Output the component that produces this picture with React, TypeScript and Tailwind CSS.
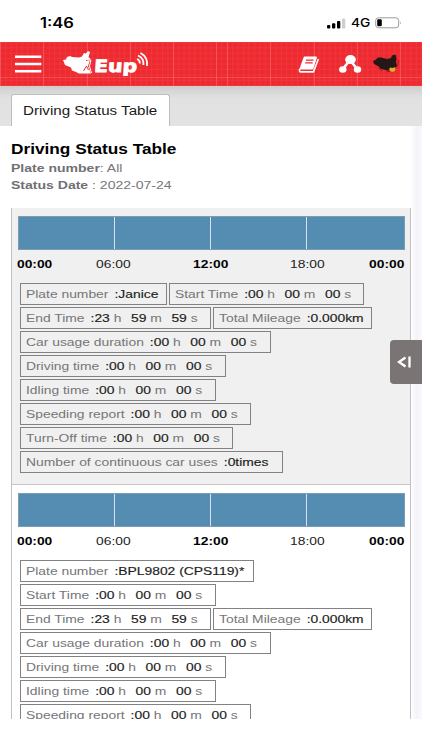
import type { ReactNode } from "react";

type Item = {
  label: string;
  width: string;
  text?: string;
  time?: [string, string, string];
};

const durations: Item[] = [
  { label: "Car usage duration", width: "w-[251px]", time: ["00", "00", "00"] },
  { label: "Driving time", width: "w-[206px]", time: ["00", "00", "00"] },
  { label: "Idling time", width: "w-[196px]", time: ["00", "00", "00"] },
  { label: "Speeding report", width: "w-[231px]", time: ["00", "00", "00"] },
];

const endRow: Item[] = [
  { label: "End Time", width: "w-[191px]", time: ["23", "59", "59"] },
  { label: "Total Mileage", width: "w-[159px]", text: "0.000km" },
];

const janice: Item[] = [
  { label: "Plate number", width: "w-[147px]", text: "Janice" },
  { label: "Start Time", width: "w-[195px]", time: ["00", "00", "00"] },
  ...endRow,
  ...durations,
  { label: "Turn-Off time", width: "w-[213px]", time: ["00", "00", "00"] },
  { label: "Number of continuous car uses", width: "w-[263px]", text: "0times" },
];

const bpl: Item[] = [
  { label: "Plate number", width: "w-[234px]", text: "BPL9802 (CPS119)*" },
  { label: "Start Time", width: "w-[196px]", time: ["00", "00", "00"] },
  ...endRow,
  ...durations,
];

function Wide({ children, className = "" }: { children: ReactNode; className?: string }) {
  return (
    <span className={`inline-block origin-left scale-x-[1.2] whitespace-nowrap ${className}`}>
      {children}
    </span>
  );
}

function Value({ children }: { children: ReactNode }) {
  return <span className="text-[#1c1c1c] [-webkit-text-stroke:0.15px_#1c1c1c]">{children}</span>;
}

function Pill({ item }: { item: Item }) {
  return (
    <div className={`flex h-[22px] shrink-0 items-center border border-[#828284] pl-[5px] ${item.width}`}>
      <Wide className="text-[11.55px] leading-5 text-[#757577]">
        {item.label}
        <span className="ml-[5px]">
          <Value>:{item.time ? item.time[0] : item.text}</Value>
        </span>
        {item.time && (
          <>
            {" h"}
            <span className="ml-[8px]">
              <Value>{item.time[1]}</Value>
            </span>
            {" m"}
            <span className="ml-[8px]">
              <Value>{item.time[2]}</Value>
            </span>
            {" s"}
          </>
        )}
      </Wide>
    </div>
  );
}

function Vehicle({ items, className = "" }: { items: Item[]; className?: string }) {
  return (
    <section className={`h-[277px] border-b border-[#c9c5c6] pl-[5.5px] pr-[5.5px] pt-2 ${className}`}>
      <div className="grid h-[34px] grid-cols-4 divide-x divide-[#d5e3ec] border border-[#7c9cb2] bg-[#548cb2]">
        <div />
        <div />
        <div />
        <div />
      </div>
      <div className="-ml-px mt-[6px] flex h-4 items-center text-[11.5px] leading-4 text-black">
        <div className="w-12">
          <Wide className="font-bold">00:00</Wide>
        </div>
        <div className="flex flex-1 justify-center">
          <span className="scale-x-[1.2] text-[#222]">06:00</span>
        </div>
        <div className="flex flex-1 justify-center">
          <span className="scale-x-[1.2] font-bold">12:00</span>
        </div>
        <div className="flex flex-1 justify-center">
          <span className="scale-x-[1.2] text-[#222]">18:00</span>
        </div>
        <div className="flex w-12 justify-end">
          <span className="origin-right scale-x-[1.2] font-bold">00:00</span>
        </div>
      </div>
      <div className="ml-[2.5px] mt-[11px] flex flex-wrap gap-0.5">
        {items.map((item) => (
          <Pill key={item.label} item={item} />
        ))}
      </div>
    </section>
  );
}

function StatusBar() {
  return (
    <div className="flex h-[42px] items-start justify-between pl-[39.5px] pr-[20px] pt-[15px] font-[Inter,sans-serif] text-black">
      <Wide className="text-[13.8px] font-semibold leading-4">1:46</Wide>
      <div className="flex h-4 items-center">
        <svg width="19" height="11" viewBox="0 0 19 11">
          <rect x="0" y="7" width="3.3" height="3.5" rx="1" />
          <rect x="5" y="5.3" width="3.3" height="5.2" rx="1" />
          <rect x="10" y="3" width="3.3" height="7.5" rx="1" />
          <rect x="15" y="0.5" width="3.3" height="10" rx="1" fill="#cfcfcf" />
        </svg>
        <Wide className="ml-[5px] w-[19px] text-[11.5px] font-medium leading-4">4G</Wide>
        <svg className="ml-[5px]" width="27" height="12" viewBox="0 0 27 12">
          <rect x="0.7" y="0.8" width="23" height="10" rx="2.8" fill="none" stroke="#9b9b9b" />
          <rect x="2.2" y="2.3" width="4.6" height="7" rx="1.2" />
          <path d="M25 4.2q1.7 1.6 0 3.4z" fill="#9b9b9b" />
        </svg>
      </div>
    </div>
  );
}

function Header() {
  return (
    <header className="relative flex h-11 items-center bg-[#ee2a30]">
      <svg className="absolute inset-0" width="422" height="44">
        <defs>
          <pattern id="fine" width="5.4" height="5.4" patternUnits="userSpaceOnUse">
            <path d="M0 .5H5.4M.5 0V5.4" stroke="#fff" strokeOpacity=".06" />
          </pattern>
        </defs>
        <rect width="422" height="44" fill="url(#fine)" />
        <path
          d="M.5 0V44M43.5 0V44M87.5 0V44M130.5 0V44M173.5 0V44M216.5 0V44M227.5 0V44M270.5 0V44M314.5 0V44M357.5 0V44M400.5 0V44M0 35.5H422"
          stroke="#fff"
          strokeOpacity=".15"
        />
      </svg>
      <div className="relative flex w-full items-center">
        <svg className="ml-[15px]" width="27" height="20" viewBox="0 0 27 20">
          <path d="M0 2.8H26.3M0 10H26.3M0 17.2H26.3" stroke="#fff" strokeWidth="2.4" />
        </svg>
        <div className="ml-5 flex h-11 w-[88px] items-center">
          <svg className="-mt-0.5 shrink-0" width="31" height="25" viewBox="0 0 31 25" fill="#fff">
            <path d="M1 9L4 8.5 5 6 8 5 10 6 17 6.5 20 5.5 22 2 24 2.5 26 0 28 1 26.5 6 28.5 8 27 12 26 15 29 22.5H17L14 21 10 19.5 9 16.5 3 14Z" />
            <path d="M24 9.500l5 -.5-1.500 6M21.500 20l3-5 2 4" fill="none" stroke="#ee2a30" />
            <path d="M25 9h4l-1.500 6 2 7" fill="none" stroke="#fff" />
          </svg>
          <span className="mt-[3px] w-[43px] origin-left -skew-x-3 scale-x-[1.2] pl-px font-['DejaVu_Sans',sans-serif] text-[17px] font-bold leading-5 text-white [-webkit-text-stroke:0.8px_white]">
            Eup
          </span>
          <svg className="-mt-2 shrink-0" width="13" height="16" viewBox="0 0 13 16" fill="none" stroke="#fff" strokeWidth="1.8">
            <path d="M1 7Q4 8 3.8 11.5M2 3.5Q8 6 7.4 13M4.5 1Q12 5 11 14" />
          </svg>
        </div>
        <svg className="ml-auto mt-px" width="22" height="20" viewBox="0 0 22 20">
          <path d="M6.500 2.500H18L14.500 13.500H2.500Z" fill="#fff" stroke="#fff" strokeWidth="1.8" strokeLinejoin="round" />
          <path d="M1.800 13.700Q.7 16.900 3 16.900H15.500L20.300 4" fill="none" stroke="#fff" strokeWidth="1.6" strokeLinejoin="round" />
          <path d="M8 5.200H15.500M7.200 7.900H14.700" stroke="#ee2a30" strokeWidth="1.2" />
        </svg>
        <svg className="ml-[18px]" width="24" height="20" viewBox="0 0 24 20" fill="#fff">
          <path d="M12 6L4.5 15.5M12 6L19.5 15.5" stroke="#fff" strokeWidth="2.6" />
          <ellipse cx="12.5" cy="5.6" rx="5.4" ry="4.5" />
          <ellipse cx="4.8" cy="15.5" rx="3.7" ry="3.2" />
          <ellipse cx="19.5" cy="15.5" rx="3.7" ry="3.2" />
        </svg>
        <svg className="ml-[11px] mr-[22px]" width="27" height="20" viewBox="0 0 27 20">
          <path d="M0 7L3 5.500 5 3.500 8 3.500 14 5 18 4 19 1.500 22.500 .5 23.500 4 23 8 24 12 22 15 18 17 13 16 8 15 5 12 1 10Z" fill="#231815" />
          <path d="M17 13.500l2.500 .5 3-1-.5 4-3 1-3-2z" fill="#dfb024" />
          <path d="M23.500 5l2 2-1 5M5 14l4 2.500M13 17l4 .8" fill="none" stroke="#b3141c" />
        </svg>
      </div>
    </header>
  );
}

export default function App() {
  return (
    <div className="relative h-[750px] w-[422px] overflow-hidden bg-white font-['Liberation_Sans',Arial,sans-serif]">
      <StatusBar />
      <Header />

      <div className="flex h-10 items-end bg-linear-to-b from-[#cecece] via-[#e1e1e1] via-30% to-[#e3e3e3] pl-[11px]">
        <div className="flex h-[32px] w-[158.5px] items-center rounded-t-[3px] border border-b-0 border-[#bdbdbd] bg-white pl-[11px]">
          <Wide className="scale-x-[1.23] text-[12.3px] leading-5 text-[#1a1a1a]">Driving Status Table</Wide>
        </div>
      </div>

      <main className="flex h-[593px] overflow-hidden">
        <div className="w-[411px] shrink-0 pl-[11px]">
          <div className="h-[82px] pt-[14px]">
            <h1 className="h-[19px] text-[14.2px] font-bold leading-[19px] text-black">
              <Wide className="scale-x-[1.215]">Driving Status Table</Wide>
            </h1>
            <p className="h-[17px] text-[11.7px] leading-[18px] text-[#77777b]">
              <Wide>
                <b className="text-[#707074]">Plate number</b>: All
              </Wide>
            </p>
            <p className="h-[17px] text-[11.7px] leading-[18px] text-[#77777b]">
              <Wide>
                <b className="text-[#707074]">Status Date</b> : 2022-07-24
              </Wide>
            </p>
          </div>
          <div className="border-x border-[#c4bfc2]">
            <Vehicle items={janice} className="bg-[#f0f0f0]" />
            <Vehicle items={bpl} />
          </div>
        </div>
        <div className="grow bg-linear-to-r from-white via-[#f3f3f9] to-[#f9f9fd]" />
      </main>

      <button
        aria-label="Open panel"
        className="absolute right-0 top-[340px] flex h-11 w-8 items-center rounded-l bg-[#7b7474] pl-[7px]"
      >
        <svg width="15" height="14" viewBox="0 0 15 14" fill="none" stroke="#fff" strokeWidth="2.3">
          <path d="M8.500 2.5L2 7 8.500 11.5M12.5 1.5V12.5" />
        </svg>
      </button>
    </div>
  );
}
